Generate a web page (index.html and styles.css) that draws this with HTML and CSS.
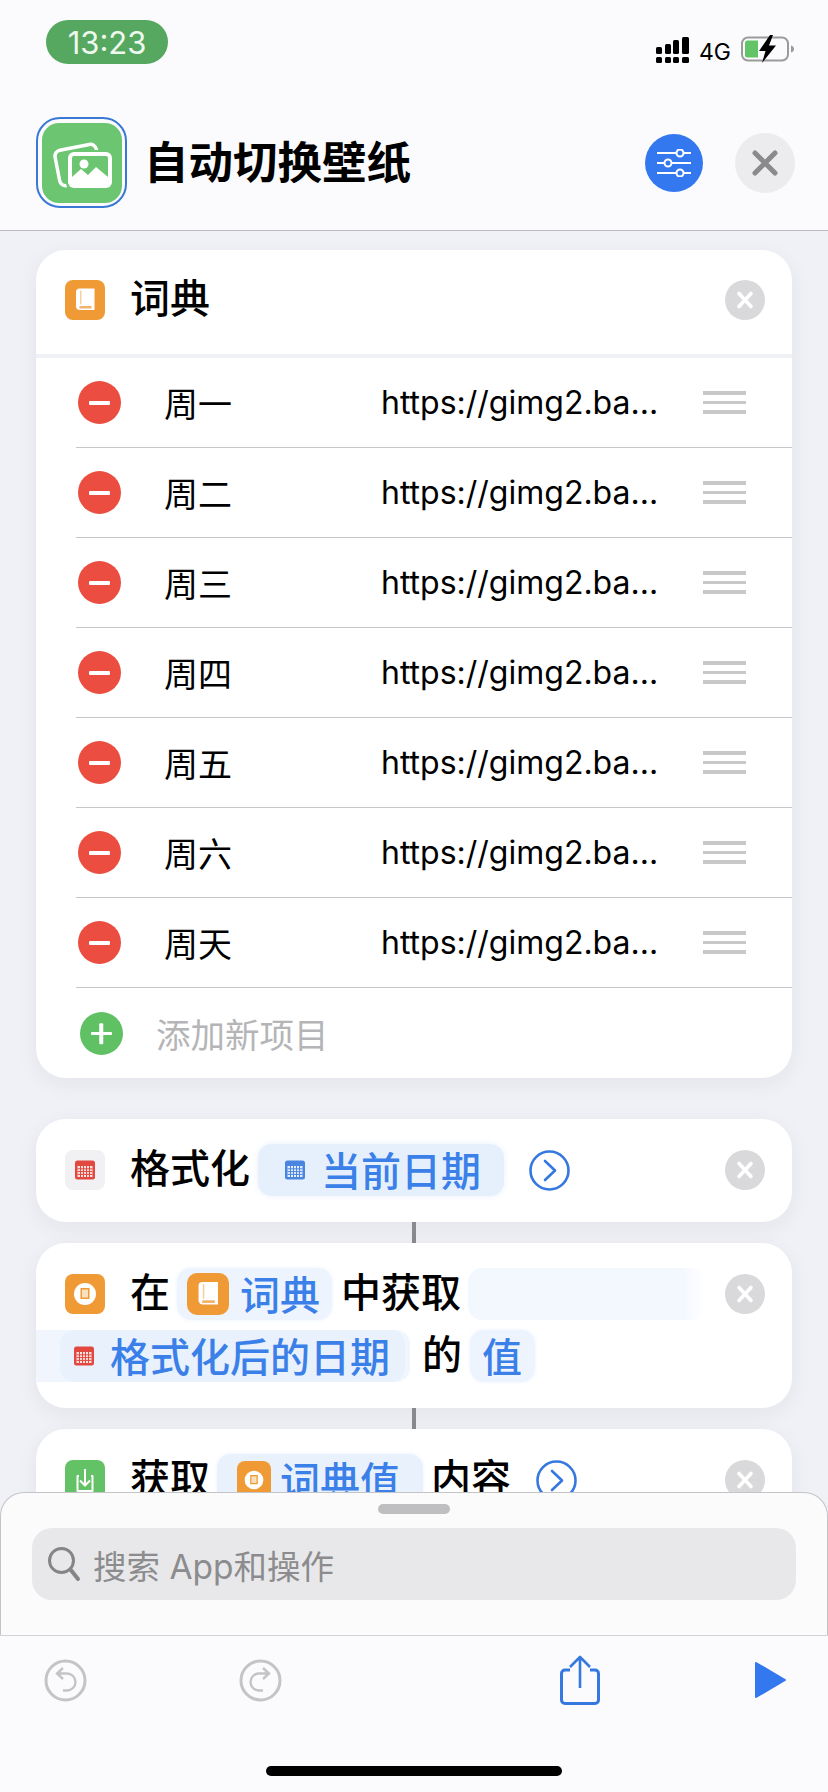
FILE: index.html
```html
<!DOCTYPE html>
<html lang="zh-CN">
<head>
<meta charset="UTF-8" />
<meta name="viewport" content="width=device-width, initial-scale=1.0" />
<title>自动切换壁纸</title>
<link rel="stylesheet" href="styles.css">
</head>
<body>
<svg class="defs" width="0" height="0">
    <symbol id="x-mark" viewBox="0 0 40 40">
        <path d="M14 13.500 L26 26.500 M26 13.500 L14 26.500" fill="none" stroke="#fff" stroke-width="3.600" stroke-linecap="round" />
    </symbol>
    <symbol id="chevron" viewBox="0 0 41 41">
        <circle cx="20.500" cy="20.500" r="19" fill="none" stroke="#3478e0" stroke-width="2.600" />
        <path d="M16 11 L26 20.500 L16 30" fill="none" stroke="#3478e0" stroke-width="2.600" stroke-linecap="round" stroke-linejoin="round" />
    </symbol>
    <symbol id="book" viewBox="0 0 40 40">
        <path d="M11 12 a3.500 3.500 0 0 1 3.500 -3.500 H29.500 V30 H15 a4 4 0 0 1 -4 -4 Z" fill="#fff" />
        <path d="M14.500 26 H26.500 V28.500 H14.500 Z" fill="#f3b36c" />
        <path d="M15 10.500 H16.500 V24.500 H15 Z" fill="#f8cf9e" />
    </symbol>
    <symbol id="dict-value" viewBox="0 0 40 40">
        <circle cx="20" cy="20" r="11" fill="#fff" />
        <path d="M15.500 14 H24.500 V25 H15.500 Z" fill="#f09a36" />
        <path d="M17 15.500 H23 V23.500 H17 Z" fill="#fbe0bd" />
    </symbol>
    <symbol id="cal-grid" viewBox="0 0 20 20">
        <path d="M0 3 a2.500 2.500 0 0 1 2.500 -2.500 H17.500 a2.500 2.500 0 0 1 2.500 2.500 V17 a2.500 2.500 0 0 1 -2.500 2.500 H2.500 a2.500 2.500 0 0 1 -2.500 -2.500 Z" fill="currentColor" />
        <path d="M2.500 6 H17.500 V17 H2.500 Z" fill="#fff" opacity=".85" />
        <path d="M5.500 6 V17 M8.500 6 V17 M11.500 6 V17 M14.500 6 V17 M2.500 8.800 H17.500 M2.500 11.600 H17.500 M2.500 14.400 H17.500" stroke="currentColor" stroke-width="1" fill="none" />
    </symbol>
</svg>

<div class="page">
    <header class="topbar">
        <div class="status">
            <div class="clock">13:23</div>
            <div class="status-right">
                <svg class="signal" width="33" height="26" viewBox="0 0 33 26" fill="#000">
                    <rect x="0" y="10" width="6" height="7" rx="1.500" />
                    <rect x="9" y="7" width="6" height="10" rx="1.500" />
                    <rect x="17" y="3" width="6" height="14" rx="1.500" />
                    <rect x="26" y="0" width="7" height="17" rx="1.500" />
                    <rect x="0" y="20" width="6" height="6" rx="1.500" />
                    <rect x="9" y="20" width="6" height="6" rx="1.500" />
                    <rect x="17" y="20" width="6" height="6" rx="1.500" />
                    <rect x="26" y="20" width="7" height="6" rx="1.500" />
                </svg>
                <span class="net">4G</span>
                <svg class="battery" width="54" height="28" viewBox="0 0 54 28">
                    <rect x="1" y="2.500" width="46" height="23" rx="6" fill="none" stroke="#9b9b9b" stroke-width="2" />
                    <path d="M4 8 a2.500 2.500 0 0 1 2.500 -2.500 H17 V22.500 H6.500 a2.500 2.500 0 0 1 -2.500 -2.500 Z" fill="#62c466" />
                    <path d="M50 10.500 q3 1 3 3.500 t-3 3.500 Z" fill="#9b9b9b" />
                    <path d="M29 0 L18 16 H24.500 L21 28 L35 10.500 H28 L32 0 Z" fill="#000" />
                </svg>
            </div>
        </div>
        <div class="titlebar">
            <div class="app-icon">
                <svg width="80" height="80" viewBox="0 0 80 80">
                    <rect width="80" height="80" rx="17" fill="#6cc570" />
                    <rect x="15" y="24" width="42" height="36" rx="6" fill="none" stroke="#fff" stroke-width="3.500" transform="rotate(-11 36 42)" />
                    <rect x="24" y="27" width="48" height="40" rx="7" fill="#6cc570" />
                    <rect x="26" y="29" width="44" height="36" rx="6" fill="#fff" />
                    <rect x="30" y="33" width="36" height="24" rx="2" fill="#6cc570" />
                    <circle cx="42" cy="41" r="4.500" fill="#fff" />
                    <path d="M30 58 L30 54 L39 46 L46 52 L54 44 L66 54 L66 58 Z" fill="#fff" />
                </svg>
            </div>
            <h1 class="title">自动切换壁纸</h1>
            <button class="round-btn settings-btn" type="button">
                <svg width="36" height="28" viewBox="0 0 36 28" fill="#3478f0" stroke="#fff" stroke-width="2">
                    <path d="M1 4 H35 M1 14 H35 M1 24 H35" />
                    <circle cx="24" cy="4" r="3.500" />
                    <circle cx="12" cy="14" r="3.500" />
                    <circle cx="24" cy="24" r="3.500" />
                </svg>
            </button>
            <button class="round-btn close-btn" type="button">
                <svg width="28" height="28" viewBox="0 0 28 28">
                    <path d="M4 4 L24 24 M24 4 L4 24" stroke="#8a8a8c" stroke-width="5" stroke-linecap="round" />
                </svg>
            </button>
        </div>
    </header>

    <main class="flow">
        <section class="card dict-card">
            <div class="dict-head">
                <svg class="step-icon orange"><use href="#book" /></svg>
                <span class="step-text">词典</span>
                <svg class="remove"><use href="#x-mark" /></svg>
            </div>
            <ul class="dict-list" id="dictList"></ul>
            <div class="dict-add">
                <span class="add-dot"></span>
                <span class="add-text">添加新项目</span>
            </div>
        </section>

        <section class="card step step-format">
            <svg class="step-icon pale red-ink"><use href="#cal-grid" x="9" y="10" width="22" height="20" /></svg>
            <div class="step-body">
                <div class="line">
                    <span class="step-text">格式化</span>
                    <span class="chip chip-date">
                        <svg class="chip-cal blue-ink"><use href="#cal-grid" /></svg>
                        当前日期
                    </span>
                    <svg class="chevron"><use href="#chevron" /></svg>
                </div>
            </div>
            <svg class="remove"><use href="#x-mark" /></svg>
        </section>
        <div class="link"></div>

        <section class="card step">
            <svg class="step-icon orange"><use href="#dict-value" /></svg>
            <div class="step-body">
                <div class="line">
                    <span class="step-text">在</span>
                    <span class="chip chip-dict">
                        <svg class="chip-book"><use href="#book" /></svg>
                        词典
                    </span>
                    <span class="step-text">中获取</span>
                    <span class="chip chip-empty"></span>
                </div>
                <div class="line line-bleed">
                    <span class="band">
                        <span class="chip chip-formatted">
                            <svg class="chip-cal red-ink"><use href="#cal-grid" /></svg>
                            格式化后的日期
                        </span>
                    </span>
                    <span class="step-text">的</span>
                    <span class="chip chip-value">值</span>
                </div>
            </div>
            <svg class="remove"><use href="#x-mark" /></svg>
        </section>
        <div class="link"></div>

        <section class="card step">
            <svg class="step-icon green" viewBox="0 0 40 40">
                <path d="M14 16 H12.500 V31 H27.500 V16 H26" fill="none" stroke="#fff" stroke-width="2" stroke-linejoin="round" />
                <path d="M20 9 V25 M15 20.500 L20 25.500 L25 20.500" fill="none" stroke="#fff" stroke-width="2" />
            </svg>
            <div class="step-body">
                <div class="line">
                    <span class="step-text">获取</span>
                    <span class="chip chip-result">
                        <svg class="chip-value-icon orange"><use href="#dict-value" /></svg>
                        词典值
                    </span>
                    <span class="step-text">内容</span>
                    <svg class="chevron"><use href="#chevron" /></svg>
                </div>
            </div>
            <svg class="remove"><use href="#x-mark" /></svg>
        </section>
    </main>

    <div class="dock">
        <div class="sheet">
            <div class="grabber"></div>
            <div class="search">
                <svg width="34" height="36" viewBox="0 0 34 36" fill="none" stroke="#858587">
                    <circle cx="14.500" cy="14.500" r="12" stroke-width="3" />
                    <path d="M23.500 23.500 L31 33" stroke-width="4" stroke-linecap="round" />
                </svg>
                <span>搜索 App和操作</span>
            </div>
        </div>
        <div class="toolbar">
            <div class="tools">
                <svg class="tool" width="43" height="43" viewBox="0 0 43 43" fill="none" stroke="#c4c4c6">
                    <circle cx="21.500" cy="21.500" r="19.500" stroke-width="3" />
                    <path d="M19 9 L13 14.500 L19 20 M13 14.500 H23 a8.500 8.500 0 0 1 0 17 H19" stroke-width="2.400" />
                </svg>
                <svg class="tool tool-redo" width="43" height="43" viewBox="0 0 43 43" fill="none" stroke="#c4c4c6">
                    <circle cx="21.500" cy="21.500" r="19.500" stroke-width="3" />
                    <path d="M24 9 L30 14.500 L24 20 M30 14.500 H20 a8.500 8.500 0 0 0 0 17 H24" stroke-width="2.400" />
                </svg>
                <svg class="tool tool-share" width="40" height="50" viewBox="0 0 40 50" fill="none" stroke="#3478e0">
                    <path d="M10 15 H5 a3.500 3.500 0 0 0 -3.500 3.500 V45 a3.500 3.500 0 0 0 3.500 3.500 H35 a3.500 3.500 0 0 0 3.500 -3.500 V18.500 a3.500 3.500 0 0 0 -3.500 -3.500 H30" stroke-width="3" />
                    <path d="M20 33 V2 M10 12 L20 2 L30 12" stroke-width="2.600" stroke-linejoin="round" />
                </svg>
                <svg class="tool tool-play" width="32" height="36" viewBox="0 0 32 36">
                    <path d="M2 1 L31 18 L2 35 Z" fill="#3478f0" stroke="#3478f0" stroke-width="2" stroke-linejoin="round" />
                </svg>
            </div>
            <div class="home-bar"></div>
        </div>
    </div>
</div>

<script>
// 词典的每一行
const days = ["周一", "周二", "周三", "周四", "周五", "周六", "周天"];
const list = document.getElementById("dictList");
days.forEach((day) => {
    list.innerHTML += `<li class="dict-row">
<span class="minus-dot"></span>
<span class="dict-key">${day}</span>
<span class="dict-val">https://gimg2.ba...</span>
<span class="drag"><i></i><i></i><i></i></span>
</li>`;
});
</script>
</body>
</html>
```

FILE: styles.css
```css
* {
    box-sizing: border-box;
}

html, body {
    margin: 0;
    padding: 0;
}

body {
    font-family: Inter, "Noto Sans CJK SC", sans-serif;
    background-color: #f0f1f6;
    color: #000;
}

.defs {
    position: absolute;
}

.page {
    position: relative;
    width: 828px;
    height: 1792px;
    overflow: hidden;
}

/* top */
.topbar {
    height: 231px;
    background-color: #fbfbfd;
    border-bottom: 1.5px solid #b9b9c0;
}

.status {
    display: flex;
    justify-content: space-between;
    height: 100px;
    padding: 20px 33px 0 46px;
}

.clock {
    width: 122px;
    height: 44px;
    border-radius: 22px;
    background-color: #56a75f;
    color: #eef8ef;
    font-size: 31px;
    line-height: 46px;
    text-align: center;
}

.status-right {
    display: flex;
    align-items: flex-start;
    padding-top: 15px;
}

.signal {
    margin-top: 2px;
}

.net {
    margin-left: 10px;
    margin-top: 4px;
    font-size: 23px;
    line-height: 26px;
}

.battery {
    margin-left: 10px;
    margin-top: 0;
}

.titlebar {
    display: flex;
    align-items: center;
    padding: 17px 33px 0 36px;
}

.app-icon {
    display: flex;
    align-items: center;
    justify-content: center;
    width: 91px;
    height: 91px;
    border: 2px solid #3a78d6;
    border-radius: 24px;
}

.app-icon svg {
    display: block;
}

.title {
    flex: 1;
    margin: 0 0 0 17px;
    font-size: 44.500px;
    font-weight: 700;
    line-height: 60px;
}

.round-btn {
    display: flex;
    align-items: center;
    justify-content: center;
    padding: 0;
    border: none;
    border-radius: 50%;
}

.settings-btn {
    width: 58px;
    height: 58px;
    background-color: #3478f0;
}

.close-btn {
    width: 60px;
    height: 60px;
    margin-left: 32px;
    background-color: #ececee;
}

/* cards */
.flow {
    padding: 19px 36px 0;
}

.card {
    background-color: #fff;
    border-radius: 30px;
    box-shadow: 0 6px 22px rgba(40, 40, 70, 0.06);
}

.dict-card {
    margin-bottom: 41px;
    overflow: hidden;
}

.dict-head {
    display: flex;
    align-items: center;
    height: 108px;
    padding: 0 27px 4px 29px;
    border-bottom: 4px solid #f0f1f4;
}

.dict-head .step-text {
    flex: 1;
}

.step-icon {
    flex: none;
    display: block;
    width: 40px;
    height: 40px;
    margin-right: 25px;
    border-radius: 8px;
}

.orange {
    background-color: #f09a36;
}

.green {
    background-color: #64c266;
}

.pale {
    background-color: #f1f1f4;
}

.red-ink {
    color: #e2483f;
}

.blue-ink {
    color: #4a85e0;
}

.step-text {
    flex: none;
    padding-bottom: 2px;
    font-size: 40px;
    font-weight: 500;
    line-height: 50px;
}

.remove {
    flex: none;
    display: block;
    width: 40px;
    height: 40px;
    border-radius: 50%;
    background-color: #d9d9db;
}

/* dictionary rows */
.dict-list {
    list-style: none;
    margin: 0;
    padding: 0;
}

.dict-row {
    display: flex;
    align-items: center;
    height: 90px;
    margin-left: 40px;
    border-bottom: 1px solid #c6c6c8;
}

.minus-dot, .add-dot {
    position: relative;
    flex: none;
    width: 43px;
    height: 43px;
    border-radius: 50%;
}

.minus-dot {
    margin-left: 2px;
    background-color: #eb4d40;
}

.minus-dot::before, .add-dot::before, .add-dot::after {
    content: "";
    position: absolute;
    left: 11px;
    top: 20px;
    width: 21px;
    height: 3.500px;
    background-color: #fff;
    border-radius: 1px;
}

.dict-key {
    flex: none;
    width: 217px;
    margin-left: 43px;
    font-size: 34px;
}

.dict-val {
    flex: 1;
    font-size: 32px;
    white-space: nowrap;
}

.drag {
    display: flex;
    flex-direction: column;
    gap: 6px;
    width: 43px;
    margin-right: 46px;
}

.drag i {
    display: block;
    height: 3.500px;
    background-color: #c8c8c8;
}

.dict-add {
    display: flex;
    align-items: center;
    height: 90px;
    padding-left: 44px;
}

.add-dot {
    background-color: #5fc163;
}

.add-dot::after {
    transform: rotate(90deg);
}

.add-text {
    margin-left: 33px;
    color: #b5b5b7;
    font-size: 34.500px;
}

/* workflow steps */
.step {
    display: flex;
    align-items: flex-start;
    padding: 25px 27px 26px 29px;
}

.step > .step-icon {
    margin-top: 6px;
}

.step > .remove {
    margin-top: 6px;
}

.step-body {
    flex: 1;
    display: flex;
    flex-direction: column;
    gap: 10px;
    min-width: 0;
}

.line {
    display: flex;
    align-items: center;
    height: 52px;
}

.link {
    width: 4px;
    height: 21px;
    margin: 0 auto;
    background-color: #8a8a8e;
}

.chip {
    display: inline-flex;
    align-items: center;
    flex: none;
    height: 52px;
    padding-bottom: 3px;
    border-radius: 14px;
    background-color: #eef4fe;
    box-shadow: 0 0 5px #eef4fe;
    color: #3a80e8;
    font-size: 40px;
    font-weight: 500;
}

.chip svg {
    margin-top: 3px;
}

.chip-date {
    width: 246px;
    margin-left: 8px;
    padding-left: 27px;
    background-color: #e6f0fd;
    box-shadow: 0 0 6px 1px #eef4fe;
}

.chip-cal {
    flex: none;
    width: 20px;
    height: 20px;
    margin-right: 16px;
}

.chevron {
    flex: none;
    display: block;
    width: 41px;
    height: 41px;
    margin-left: 25px;
}

.chip-dict {
    margin: 0 9px 0 7px;
    padding: 0 12px 3px 10px;
}

.chip-book {
    flex: none;
    width: 42px;
    height: 42px;
    margin-right: 11px;
    border-radius: 10px;
    background-color: #f09a36;
}

.chip-empty {
    width: 237px;
    margin-left: 7px;
    background: linear-gradient(to right, #f3f7fe 90%, #fff);
    box-shadow: none;
}

.line-bleed {
    margin-left: -94px;
}

.band {
    display: flex;
    align-items: center;
    flex: none;
    height: 52px;
    width: 374px;
    padding-left: 24px;
    margin-right: 12px;
    background-color: #f1f6fe;
    border-radius: 0 14px 14px 0;
}

.chip-formatted {
    width: 345px;
    padding-left: 14px;
    background-color: #e9f1fd;
    box-shadow: none;
}

.chip-value {
    width: 65px;
    margin-left: 8px;
    padding-left: 12px;
}

.chip-result {
    width: 206px;
    margin: 0 8px 0 7px;
    padding-left: 20px;
    background-color: #e9f1fd;
}

.chip-value-icon {
    flex: none;
    width: 34px;
    height: 38px;
    margin-right: 9px;
    border-radius: 8px;
}

/* bottom sheet and toolbar, always above the list */
.dock {
    position: absolute;
    left: 0;
    right: 0;
    bottom: 0;
}

.sheet {
    height: 143px;
    padding-top: 11px;
    background-color: #fbfbfc;
    border: 1px solid #c4c4c8;
    border-bottom: none;
    border-radius: 24px 24px 0 0;
}

.grabber {
    width: 72px;
    height: 10px;
    margin: 0 auto 14px;
    border-radius: 5px;
    background-color: #bfbfc1;
}

.search {
    display: flex;
    align-items: center;
    height: 72px;
    margin: 0 31px;
    padding-left: 15px;
    border-radius: 20px;
    background-color: #e8e8ea;
    color: #8c8c8e;
    font-size: 33.500px;
}

.search span {
    margin-left: 12px;
}

.toolbar {
    height: 157px;
    background-color: #fbfbfd;
    border-top: 1px solid #d4d4d8;
}

.tools {
    display: flex;
    align-items: center;
    height: 88px;
    padding: 0 42px 0 44px;
}

.tool-redo {
    margin-left: 152px;
}

.tool-share {
    margin-left: auto;
    margin-right: 154px;
}

.home-bar {
    width: 296px;
    height: 10px;
    margin: 42px auto 0;
    border-radius: 5px;
    background-color: #000;
}
```
